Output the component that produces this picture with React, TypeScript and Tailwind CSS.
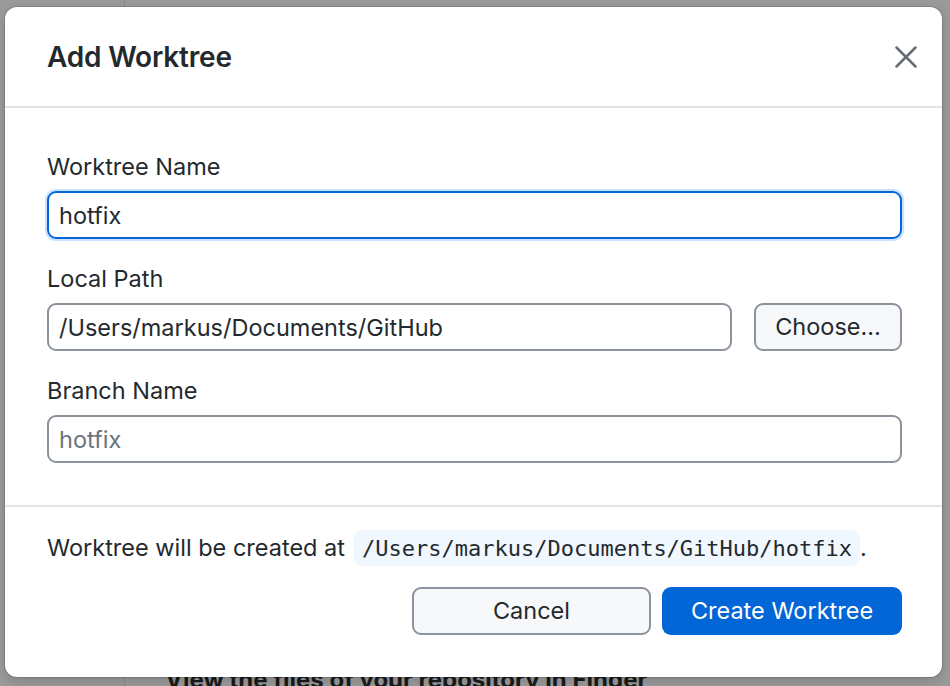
import { X } from "lucide-react";

const FONT = { fontFamily: "Inter, 'Noto Sans', sans-serif" };

function Label({ children }: { children: React.ReactNode }) {
  return <div className="text-[23.5px] leading-[33px] text-[#24292e]">{children}</div>;
}

export default function App() {
  return (
    <div className="relative h-[686px] w-[950px] overflow-hidden bg-[#9a9a9a]" style={FONT}>
      {/* dimmed page behind the modal */}
      <div className="flex h-full">
        <div className="w-[125px] border-r border-[#8a8a8a]" />
        <div className="flex flex-1 flex-col justify-end pl-[40px]">
          <div className="translate-y-[12px] text-[24px] font-bold text-[#1a1a1a]">
            View the files of your repository in Finder
          </div>
        </div>
      </div>

      {/* modal */}
      <div className="absolute left-[5px] top-[7px] flex h-[670px] w-[937px] flex-col rounded-[12px] bg-white shadow-[0_0_0_1px_rgba(0,0,0,0.12),0_4px_12px_rgba(0,0,0,0.15)]">
        <div className="flex h-[101px] items-center justify-between border-b-2 border-[#e1e4e8] pl-[42px] pr-[16px]">
          <h1 className="text-[28px] font-semibold tracking-[-0.2px] text-[#24292e]">Add Worktree</h1>
          <button className="flex h-[40px] w-[40px] items-center justify-center text-[#656d76]">
            <X size={38} strokeWidth={1.6} />
          </button>
        </div>

        <div className="flex flex-col border-b-2 border-[#e1e4e8] pb-[42px] pl-[42px] pr-[40px] pt-[42px]">
          <Label>Worktree Name</Label>
          <input
            readOnly
            value="hotfix"
            className="mt-[8px] h-[48px] rounded-[9px] border-2 border-[#0366d6] px-[10px] text-[23.5px] text-[#24292e] shadow-[0_0_0_2px_#c8e1ff] outline-none"
            style={FONT}
          />

          <div className="mt-[23px]">
            <Label>Local Path</Label>
          </div>
          <div className="mt-[8px] flex gap-[22px]">
            <input
              readOnly
              value="/Users/markus/Documents/GitHub"
              className="h-[48px] flex-1 rounded-[9px] border-2 border-[#8c939c] px-[10px] text-[23.5px] text-[#24292e] outline-none"
              style={FONT}
            />
            <button className="h-[48px] w-[148px] rounded-[9px] border-2 border-[#8c939c] bg-[#f6f8fa] text-[23.5px] text-[#24292e]">
              Choose…
            </button>
          </div>

          <div className="mt-[23px]">
            <Label>Branch Name</Label>
          </div>
          <input
            readOnly
            placeholder="hotfix"
            className="mt-[8px] h-[48px] rounded-[9px] border-2 border-[#8c939c] px-[10px] text-[23.5px] text-[#24292e] outline-none placeholder:text-[#6a737d]"
            style={FONT}
          />
        </div>

        <div className="flex flex-col pl-[42px] pr-[40px] pt-[23px]">
          <div className="flex h-[36px] items-center text-[23.5px] text-[#24292e]">
            <span>Worktree will be created at</span>
            <code
              className="ml-[9px] flex h-[36px] items-center rounded-[8px] bg-[#f1f7fe] px-[8px] text-[22px]"
              style={{ fontFamily: "'DejaVu Sans Mono', monospace" }}
            >
              /Users/markus/Documents/GitHub/hotfix
            </code>
            <span>.</span>
          </div>
          <div className="mt-[21px] flex justify-end gap-[11px]">
            <button className="h-[48px] w-[239px] rounded-[9px] border-2 border-[#8c939c] bg-[#f6f8fa] text-[23.5px] text-[#24292e]">
              Cancel
            </button>
            <button className="h-[48px] w-[240px] rounded-[9px] bg-[#0366d6] text-[23.5px] text-white">
              Create Worktree
            </button>
          </div>
        </div>
      </div>
    </div>
  );
}
